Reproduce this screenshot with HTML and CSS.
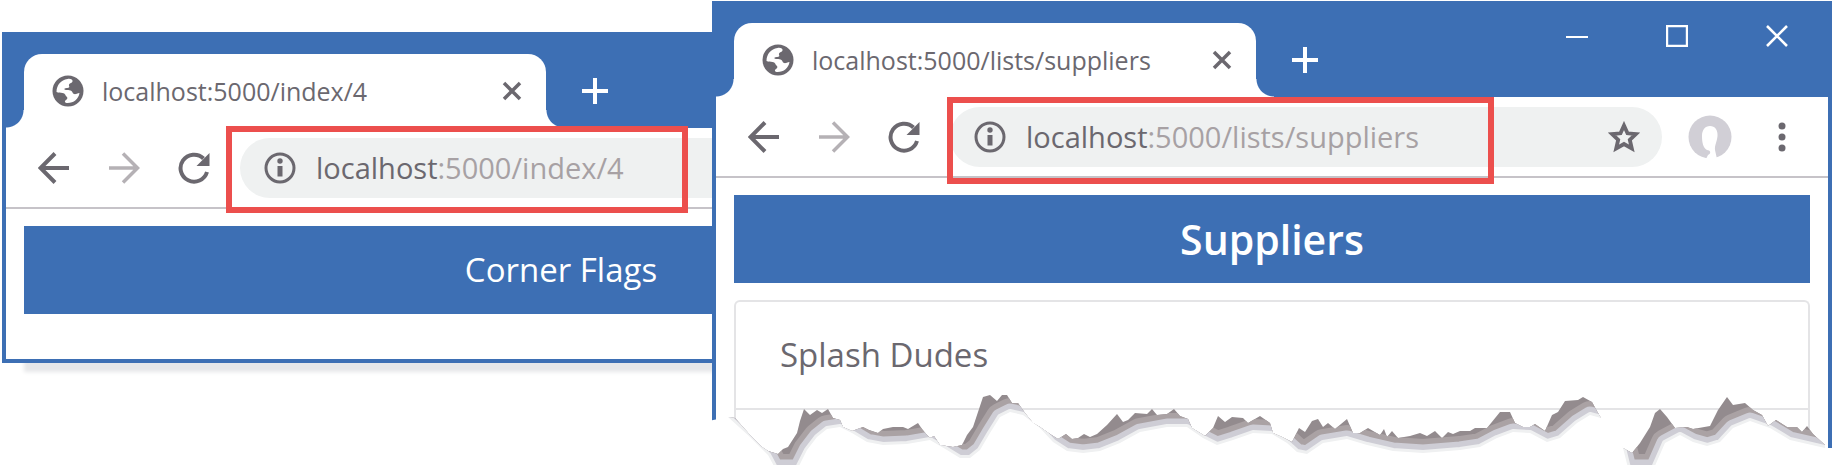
FILE: index.html
```html
<!DOCTYPE html>
<html lang="en">
<head>
<meta charset="utf-8">
<title>Browser windows</title>
<link rel="stylesheet" href="styles.css">
</head>
<body>
<svg class="defs" aria-hidden="true">
  <symbol id="globe" viewBox="0 0 32 32">
    <circle cx="16" cy="16" r="15.500" fill="#6b686f"/>
    <path d="M4.500 17C4.500 10 9 5 15.500 4C18.500 3.500 21 4.500 20.500 6.500C20 8 18 8 17 9.500C16.500 11 18 11.500 17 12.500C15 13.500 12 12.500 12.500 14.500C13 15.500 17 14 19.500 16C21 17.500 20.500 18.500 22 19C23.500 19.500 25 18.500 27.500 18C26.500 24 22 28 15.500 28C13 28 12 26.500 14 25C16 23.500 15.500 22.500 14.500 21.500C13 20 13.500 18.500 10.500 18C8.500 17.500 6.500 18 4.500 17Z" fill="#fff"/>
  </symbol>
  <symbol id="close" viewBox="0 0 20 20"><path d="M2 2L18 18M18 2L2 18" stroke="currentColor" stroke-width="3.500" fill="none"/></symbol>
  <symbol id="plus" viewBox="0 0 26 26"><path d="M13 0V26M0 13H26" stroke="currentColor" stroke-width="4" fill="none"/></symbol>
  <symbol id="back" viewBox="0 0 32 32"><path d="M31 16H3M17 1.500L2.500 16L17 30.500" stroke="currentColor" stroke-width="4" fill="none"/></symbol>
  <symbol id="forward" viewBox="0 0 32 32"><path d="M1 16H29M15 1.500L29.500 16L15 30.500" stroke="currentColor" stroke-width="3.500" fill="none"/></symbol>
  <symbol id="reload" viewBox="0 0 32 32"><path d="M25.500 6.500A13.500 13.500 0 1 0 29 20" stroke="currentColor" stroke-width="4" fill="none"/><path d="M31.500 1V14H18.500Z" fill="currentColor"/></symbol>
  <symbol id="info" viewBox="0 0 32 32"><circle cx="16" cy="16" r="14" stroke="currentColor" stroke-width="3" fill="none"/><path d="M16 14V24.500" stroke="currentColor" stroke-width="5"/><circle cx="16" cy="9" r="2.700" fill="currentColor"/></symbol>
  <symbol id="star" viewBox="0 0 32 32"><path d="M16 4.500L19.500 12.300L28 13L21.800 18.800L23.800 27.500L16 23L8.200 27.500L10.200 18.800L4 13L12.500 12.300Z" stroke="currentColor" stroke-width="3.800" fill="none"/></symbol>
</svg>

<main class="desktop">
  <section class="window window-index">
    <header class="titlebar">
      <div class="tab">
        <svg class="icon"><use href="#globe"/></svg>
        <span class="tab-title">localhost:5000/index/4</span>
        <button class="tab-close" aria-label="Close tab"><svg class="icon-small"><use href="#close"/></svg></button>
      </div>
      <button class="new-tab" aria-label="New tab"><svg class="icon-plus"><use href="#plus"/></svg></button>
    </header>
    <nav class="toolbar">
      <button aria-label="Back"><svg class="icon"><use href="#back"/></svg></button>
      <button class="muted" aria-label="Forward"><svg class="icon"><use href="#forward"/></svg></button>
      <button aria-label="Reload"><svg class="icon"><use href="#reload"/></svg></button>
      <div class="address">
        <svg class="icon"><use href="#info"/></svg>
        <a class="url" href="#"><span class="host">localhost</span>:5000/index/4</a>
      </div>
      <div class="highlight"></div>
    </nav>
    <div class="page">
      <p class="banner">Corner Flags</p>
    </div>
  </section>

  <div class="front">
    <section class="window window-list">
      <header class="titlebar">
        <div class="tab">
          <svg class="icon"><use href="#globe"/></svg>
          <span class="tab-title">localhost:5000/lists/suppliers</span>
          <button class="tab-close" aria-label="Close tab"><svg class="icon-small"><use href="#close"/></svg></button>
        </div>
        <button class="new-tab" aria-label="New tab"><svg class="icon-plus"><use href="#plus"/></svg></button>
        <div class="controls">
          <button aria-label="Minimize"><svg class="icon-control" viewBox="0 0 22 22"><path d="M0 12H22" stroke="#fff" stroke-width="2"/></svg></button>
          <button aria-label="Maximize"><svg class="icon-control" viewBox="0 0 22 22"><path d="M1 1H21V21H1Z" stroke="#fff" stroke-width="2.400" fill="none"/></svg></button>
          <button aria-label="Close"><svg class="icon-control" viewBox="0 0 22 22"><path d="M1 1L21 21M21 1L1 21" stroke="#fff" stroke-width="2.600"/></svg></button>
        </div>
      </header>
      <nav class="toolbar">
        <button aria-label="Back"><svg class="icon"><use href="#back"/></svg></button>
        <button class="muted" aria-label="Forward"><svg class="icon"><use href="#forward"/></svg></button>
        <button aria-label="Reload"><svg class="icon"><use href="#reload"/></svg></button>
        <div class="address">
          <svg class="icon"><use href="#info"/></svg>
          <a class="url" href="#"><span class="host">localhost</span>:5000/lists/suppliers</a>
          <button class="bookmark" aria-label="Bookmark"><svg class="icon"><use href="#star"/></svg></button>
        </div>
        <button aria-label="Profile"><svg class="avatar" viewBox="0 0 44 44"><circle cx="22" cy="22" r="21.500" fill="#d1cfd6"/><path d="M22 11C27 11 30 15 29.500 21C29 27 26.500 30 27 35L29 44H18L20 40C24 38 22 35 19 35C15 33 14 27 14 21C14 15 17 11 22 11Z" fill="#fff"/></svg></button>
        <button class="menu" aria-label="Menu"><svg class="dots" viewBox="0 0 8 32"><circle cx="4" cy="5" r="3.500"/><circle cx="4" cy="16" r="3.500"/><circle cx="4" cy="27" r="3.500"/></svg></button>
        <div class="highlight"></div>
      </nav>
      <div class="page">
        <h1 class="banner">Suppliers</h1>
        <ul class="list">
          <li>Splash Dudes</li>
          <li></li>
        </ul>
      </div>
    </section>
    <svg class="torn" viewBox="712 390 1120 75" preserveAspectRatio="none" aria-hidden="true">
      <defs>
        <path id="edge" d="M728 417L750 437L768 455L775 468H798L807 450L817 437L827 429L840 427L852 433L867 442L883 445L907 444L930 440L947 450L960 458H970L980 450L990 433L1000 417L1010 412L1023 415L1040 428L1053 442L1067 451L1083 453L1100 451L1120 443L1140 432L1167 427H1187L1203 438L1217 445L1233 440L1253 433L1272 434L1287 443L1297 452L1307 454L1323 443L1347 439L1367 445L1393 451L1423 453L1460 450L1480 447L1497 438L1513 432L1530 433L1547 442L1560 438L1577 423L1590 415L1601 418L1603 410H1618L1623 448L1628 468H1654L1665 443L1680 435L1693 442L1707 446L1720 442L1733 428L1750 421L1770 428L1790 440L1825 448"/>
        <path id="ridge" d="M728 417L735 418L750 435L762 447L768 451L778 454L783 449L788 447L797 433L800 421L804 409L810 415L817 410L822 413L828 409L833 418L840 420L843 427L852 431L863 427L869 430L878 433L883 429L893 427H903L908 429L918 423L922 429L927 435L930 438L934 436L940 445L953 447L962 445L967 435L973 427L978 412L983 397L990 395L997 401L1002 395L1007 395L1012 403H1018L1025 413L1033 423L1040 427L1050 434L1058 439L1066 434L1072 439L1078 438L1084 434L1090 437L1097 434L1107 425L1117 414L1123 422L1128 420L1135 413L1147 414L1152 409L1157 415L1167 414L1174 409L1180 416L1188 419L1192 428L1205 436L1213 428L1218 416L1225 422L1232 417L1243 418L1248 423L1260 416L1270 423L1273 433L1282 437L1292 442L1299 428L1305 432L1312 421L1318 419L1323 427L1328 423L1335 429L1347 419L1353 433H1360L1368 428L1380 435L1384 429L1387 437L1392 431L1398 438L1410 436L1420 433L1427 436L1435 431L1442 438L1448 432L1453 434L1460 431L1470 431L1475 428L1487 428L1500 412H1510L1515 423L1523 427H1530L1535 424L1545 431L1552 415L1558 412L1565 401L1578 400L1583 397L1592 402L1598 413L1601 418L1623 448L1632 453L1640 443L1650 427L1655 413L1660 409L1667 417L1675 428L1687 427L1693 429L1710 426L1718 410L1727 397L1733 405L1745 403L1753 410L1762 415L1768 426L1776 420L1787 427H1797L1802 432L1807 426L1813 434L1825 445V470H728Z"/>
        <clipPath id="tear"><use href="#ridge"/></clipPath>
      </defs>
      <use href="#ridge" fill="#938b8e"/>
      <g clip-path="url(#tear)" fill="none" stroke-linejoin="round">
        <use href="#edge" stroke="#aaa2a4" stroke-width="28"/>
        <use href="#edge" stroke="#cecdd5" stroke-width="17"/>
        <use href="#edge" stroke="#eff0f1" stroke-width="6"/>
      </g>
      <path d="M708 421L728 417L750 437L768 455L775 468H798L807 450L817 437L827 429L840 427L852 433L867 442L883 445L907 444L930 440L947 450L960 458H970L980 450L990 433L1000 417L1010 412L1023 415L1040 428L1053 442L1067 451L1083 453L1100 451L1120 443L1140 432L1167 427H1187L1203 438L1217 445L1233 440L1253 433L1272 434L1287 443L1297 452L1307 454L1323 443L1347 439L1367 445L1393 451L1423 453L1460 450L1480 447L1497 438L1513 432L1530 433L1547 442L1560 438L1577 423L1590 415L1601 418L1603 410H1618L1623 448L1628 468H1654L1665 443L1680 435L1693 442L1707 446L1720 442L1733 428L1750 421L1770 428L1790 440L1825 448H1834V470H708Z" fill="#fff"/>
    </svg>
  </div>
</main>
</body>
</html>
```
FILE: styles.css
```css
* { box-sizing: border-box; }

body {
  margin: 0;
  background: #fff;
  color: #6b686f;
  font-family: "Open Sans", "Noto Sans", sans-serif;
}

button {
  display: flex;
  padding: 0;
  border: 0;
  background: none;
  color: inherit;
}

svg { display: block; flex: none; }

.defs { position: absolute; width: 0; height: 0; }

.desktop {
  display: grid;
  grid-template-columns: minmax(0, 710fr) minmax(0, 1120fr);
  align-items: start;
  padding: 1px 1px 0 2px;
  overflow: hidden;
}

.window {
  border: 4px solid #3d6fb4;
  border-top: 0;
  background: #fff;
}

.window-index {
  margin-top: 31px;
  border-right: 0;
  box-shadow: 22px 9px 4px #e6e7e9;
}

.front { position: relative; }

.window-list { border-bottom: 0; }

.titlebar {
  display: flex;
  align-items: center;
  height: 96px;
  padding: 22px 0 0 18px;
  background: #3d6fb4;
}

.tab {
  position: relative;
  display: flex;
  align-items: center;
  width: 522px;
  height: 74px;
  padding: 0 24px 0 28px;
  border-radius: 18px 18px 0 0;
  background: #fff;
}

.tab::before,
.tab::after {
  content: "";
  position: absolute;
  bottom: 0;
  width: 18px;
  height: 18px;
}

.tab::before {
  right: 100%;
  background: radial-gradient(circle at 0 0, #3d6fb4 17px, #fff 18px);
}

.tab::after {
  left: 100%;
  background: radial-gradient(circle at 100% 0, #3d6fb4 17px, #fff 18px);
}

.tab-title {
  margin-left: 18px;
  font-size: 25px;
  white-space: nowrap;
}

.tab-close { margin-left: auto; }
.new-tab { margin-left: 36px; color: #fff; }

.icon { width: 32px; height: 32px; }
.icon-small { width: 20px; height: 20px; }
.icon-plus { width: 26px; height: 26px; }
.icon-control { width: 22px; height: 22px; }

.controls {
  display: flex;
  gap: 78px;
  align-self: flex-start;
  margin: 2px 40px 0 auto;
}

.toolbar {
  position: relative;
  display: flex;
  align-items: center;
  gap: 38px;
  height: 81px;
  padding: 0 22px 0 32px;
  border-bottom: 2px solid #c6c3c8;
}

.muted { color: #b5b1b5; }

.address {
  display: flex;
  flex: 1;
  align-items: center;
  min-width: 0;
  height: 60px;
  margin-left: -8px;
  padding: 0 22px 0 24px;
  border-radius: 30px;
  background: #eff1f1;
}

.window-index .toolbar { padding-right: 0; }
.window-index .address { border-radius: 30px 0 0 30px; }

.url {
  margin-left: 20px;
  color: #a7a1a4;
  font-size: 29px;
  text-decoration: none;
  white-space: nowrap;
}

.host { color: #6b686f; }
.bookmark { margin-left: auto; }
.avatar { width: 44px; height: 44px; }
.toolbar .address + button { margin-left: -12px; }
.menu { margin: 0 20px 0 8px; }
.dots { width: 8px; height: 32px; fill: #6b686f; }

.highlight {
  position: absolute;
  top: -2px;
  left: 220px;
  width: 462px;
  height: 87px;
  border: 6px solid #ec4f4d;
}

.window-list .highlight {
  top: 0;
  left: 231px;
  width: 547px;
}

.page { padding: 17px 18px 0; }

.window-index .page { padding: 17px 0 45px 18px; }

.banner {
  margin: 0;
  background: #3d6fb4;
  color: #fff;
  font-size: 33px;
  font-weight: 400;
  line-height: 88px;
  text-align: center;
}

.window-index .banner { padding-left: 386px; }

h1.banner { font-size: 41px; font-weight: 600; }

.list {
  margin: 17px 0 0;
  padding: 0;
  border: 2px solid #e4e4e6;
  border-bottom: 0;
  border-radius: 6px 6px 0 0;
  list-style: none;
}

.list li {
  height: 55px;
  padding: 0 44px;
  font-size: 33px;
  line-height: 106px;
}

.list li:first-child {
  height: 108px;
  border-bottom: 2px solid #e4e4e6;
}

.torn {
  position: absolute;
  bottom: 0;
  left: 0;
  width: 100%;
  height: 75px;
}
```
